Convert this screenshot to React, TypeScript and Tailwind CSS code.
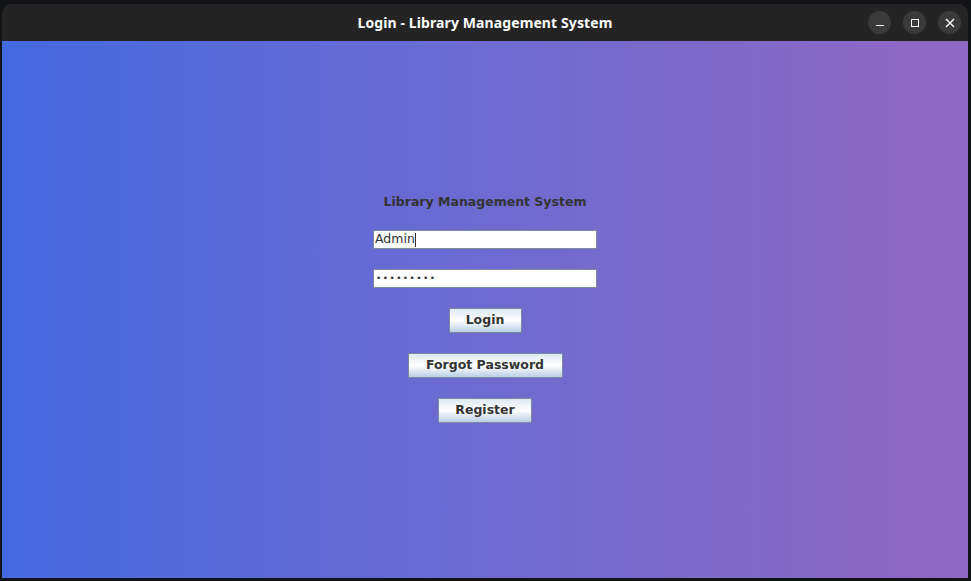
export default function App() {
  return (
    <div className="w-[971px] h-[581px] bg-[#121317] pt-[4px] pl-[2px] pr-[3px] pb-[3px] overflow-hidden">
      <div className="w-full h-full flex flex-col rounded-t-[10px] overflow-hidden bg-[#242424]">
        {/* title bar */}
        <div className="relative h-[37px] shrink-0 flex items-center justify-center bg-[#242424]">
          <span className="text-white text-[14px] font-bold font-['Noto_Sans',sans-serif] tracking-[0.1px]">
            Login - Library Management System
          </span>
          <div className="absolute right-[7px] top-[7px] flex gap-[12px]">
            <div className="w-[23px] h-[23px] rounded-full bg-[#3a3a3a] flex items-center justify-center">
              <div className="w-[8px] h-[1.5px] bg-white mt-[6px]" />
            </div>
            <div className="w-[23px] h-[23px] rounded-full bg-[#3a3a3a] flex items-center justify-center">
              <div className="w-[8px] h-[8px] border border-white" />
            </div>
            <div className="w-[23px] h-[23px] rounded-full bg-[#3a3a3a] flex items-center justify-center">
              <svg width="10" height="10" viewBox="0 0 10 10">
                <path d="M1 1 L9 9 M9 1 L1 9" stroke="white" strokeWidth="1.4" />
              </svg>
            </div>
          </div>
        </div>

        {/* content */}
        <div className="flex-1 flex flex-col items-center justify-center gap-5 pb-[2px] bg-gradient-to-r from-[#4469df] to-[#9069c2] font-['DejaVu_Sans',sans-serif]">
          <div className="h-[16px] leading-[16px] text-[12.5px] font-bold text-[#333333]">
            Library Management System
          </div>
          <div className="w-[224px] h-[19px] bg-white border border-[#7a8a99] shadow-[inset_-1px_-1px_0_#fff] flex items-center pl-[1px] text-[12.5px] text-[#333333]">
            Admin<span className="w-px h-[14px] bg-[#333333]" />
          </div>
          <div className="w-[224px] h-[19px] bg-white border border-[#7a8a99] flex items-center pl-[2px] text-[9px] text-[#333333] tracking-[1.4px]">
            •••••••••
          </div>
          <button className="w-[73px] h-[25px] border border-[#7a8a99] bg-gradient-to-b from-[#dde8f3] via-white to-[#b8cfe5] text-[12.5px] font-bold text-[#333333]">
            Login
          </button>
          <button className="w-[155px] h-[25px] border border-[#7a8a99] bg-gradient-to-b from-[#dde8f3] via-white to-[#b8cfe5] text-[12.5px] font-bold text-[#333333]">
            Forgot Password
          </button>
          <button className="w-[94px] h-[25px] border border-[#7a8a99] bg-gradient-to-b from-[#dde8f3] via-white to-[#b8cfe5] text-[12.5px] font-bold text-[#333333]">
            Register
          </button>
        </div>
      </div>
    </div>
  );
}
